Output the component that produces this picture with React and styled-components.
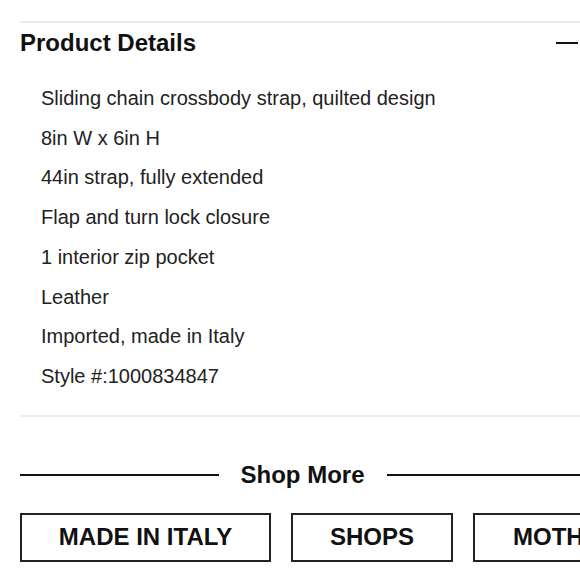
import React from 'react';
import styled, { createGlobalStyle } from 'styled-components';

const GlobalStyle = createGlobalStyle`
	html, body {
		margin: 0;
		padding: 0;
		background: #fff;
		overflow: hidden;
	}
	body {
		font-family: 'Liberation Sans', Arial, sans-serif;
		color: #222;
	}
`;

const Page = styled.div`
	width: 580px;
	padding: 21px 0 0 20px;
	box-sizing: border-box;
`;

const Divider = styled.div`
	height: 2px;
	background: #ececec;
`;

const Header = styled.div`
	display: flex;
	align-items: center;
	justify-content: space-between;
	height: 38px;
	padding-top: 1px;
`;

const Title = styled.h2`
	margin: 0;
	font-size: 24px;
	font-weight: 700;
	color: #111;
`;

const Minus = styled.span`
	display: block;
	width: 22px;
	height: 1.5px;
	background: #111;
	margin-right: 2px;
`;

const List = styled.ul`
	list-style: none;
	margin: 0;
	padding: 17px 0 18px 21px;
`;

const Item = styled.li`
	font-size: 20px;
	line-height: 39.7px;
	color: #222;
`;

const ShopMore = styled.div`
	display: flex;
	align-items: center;
	margin-top: 44px;
`;

const Rule = styled.div`
	flex: ${p => p.$grow};
	height: 2px;
	background: #111;
`;

const ShopTitle = styled.h3`
	margin: 0 22px;
	font-size: 24px;
	font-weight: 700;
	color: #111;
	white-space: nowrap;
`;

const Tags = styled.div`
	display: flex;
	gap: 20px;
	margin-top: 24px;
	width: 700px;
`;

const Tag = styled.div`
	flex: none;
	width: ${p => p.$w}px;
	height: 49px;
	box-sizing: border-box;
	border: 2px solid #222;
	display: flex;
	align-items: center;
	justify-content: center;
	font-size: 24px;
	font-weight: 700;
	color: #111;
	text-transform: uppercase;
	white-space: nowrap;
`;

const details = [
	'Sliding chain crossbody strap, quilted design',
	'8in W x 6in H',
	'44in strap, fully extended',
	'Flap and turn lock closure',
	'1 interior zip pocket',
	'Leather',
	'Imported, made in Italy',
	'Style #:1000834847',
];

const App = () => (
	<Page>
		<GlobalStyle />
		<Divider />
		<Header>
			<Title>Product Details</Title>
			<Minus />
		</Header>
		<List>
			{details.map(d => <Item key={d}>{d}</Item>)}
		</List>
		<Divider />
		<ShopMore>
			<Rule $grow={198} />
			<ShopTitle>Shop More</ShopTitle>
			<Rule $grow={193} />
		</ShopMore>
		<Tags>
			<Tag $w={251}>Made in Italy</Tag>
			<Tag $w={162}>Shops</Tag>
			<Tag $w={200}>Mothers</Tag>
		</Tags>
	</Page>
);

export default App;
